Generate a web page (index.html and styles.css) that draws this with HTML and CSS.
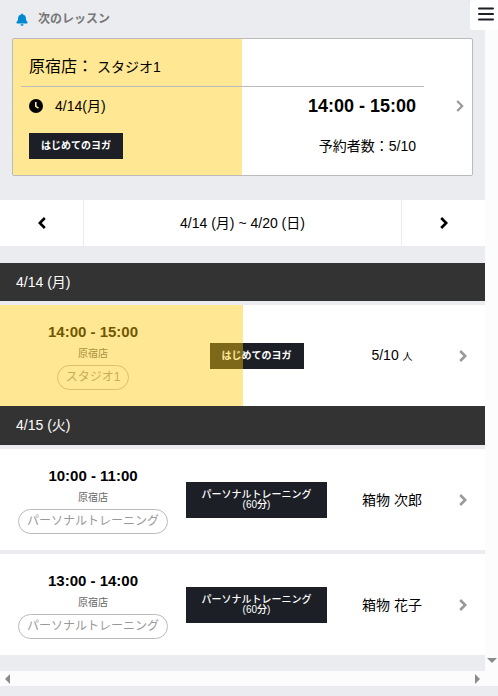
FILE: index.html
```html
<!DOCTYPE html>
<html lang="ja">
<head>
    <meta charset="UTF-8">
    <meta name="viewport" content="width=device-width, initial-scale=1.0">
    <title>レッスン</title>
    <link rel="stylesheet" href="styles.css">
</head>
<body>
    <button class="menu" type="button" aria-label="メニュー">
        <svg width="16" height="14" viewBox="0 0 16 14"><path d="M1 1.500h14M1 7h14M1 12.500h14" fill="none" stroke="#1c1f26" stroke-width="2" stroke-linecap="round"/></svg>
    </button>
    <div class="frame">
        <main class="content">
            <h1 class="next-title">
                <svg width="12" height="13" viewBox="0 0 12 13"><path d="M6 0.5c.6 0 .9.4.9.9C8.900 1.900 9.900 3.300 9.900 5c0 2.300.7 3.200 1.500 4 .5.600.2 1.500-.6 1.500H1.200C.4 10.500.1 9.600.6 9 1.400 8.200 2.100 7.300 2.100 5c0-1.700 1-3.100 3-3.600 0-.5.3-.9.9-.9zM4.500 11.200h3c0 1-.6 1.500-1.500 1.500s-1.500-.5-1.500-1.500z" fill="#0288d1"/></svg>
                次のレッスン
            </h1>
            <a class="card" href="#">
                <div class="card-body">
                    <div class="place"><span class="shop-name">原宿店：</span> スタジオ1</div>
                    <div class="line">
                        <span class="date">
                            <svg width="14" height="14" viewBox="0 0 14 14"><circle cx="7" cy="7" r="7" fill="#000"/><path d="M6.800 3v4.400l2.700 1.700" fill="none" stroke="#ffe794" stroke-width="1.600"/></svg>
                            4/14(月)
                        </span>
                        <strong class="card-time">14:00 - 15:00</strong>
                    </div>
                    <div class="line">
                        <span class="badge">はじめてのヨガ</span>
                        <span>予約者数：5/10</span>
                    </div>
                </div>
                <svg class="arrow" width="8" height="12" viewBox="0 0 8 12"><path d="M1.200 1l5 5-5 5" fill="none" stroke="#999" stroke-width="2.200"/></svg>
            </a>

            <nav class="week">
                <button type="button" aria-label="前の週">
                    <svg width="8" height="12" viewBox="0 0 8 12"><path d="M6.800 1l-5 5 5 5" fill="none" stroke="#000" stroke-width="2.600"/></svg>
                </button>
                <span class="range">4/14 (月) ~ 4/20 (日)</span>
                <button type="button" aria-label="次の週">
                    <svg width="8" height="12" viewBox="0 0 8 12"><path d="M1.200 1l5 5-5 5" fill="none" stroke="#000" stroke-width="2.600"/></svg>
                </button>
            </nav>

            <section class="day">
                <h2 class="day-title">4/14 (月)</h2>
                <a class="lesson reserved" href="#">
                    <div class="when">
                        <strong class="time">14:00 - 15:00</strong>
                        <span class="shop">原宿店</span>
                        <span class="room">スタジオ1</span>
                    </div>
                    <span class="badge">はじめてのヨガ</span>
                    <span class="who">5/10 <small>人</small></span>
                    <svg class="arrow" width="8" height="12" viewBox="0 0 8 12"><path d="M1.200 1l5 5-5 5" fill="none" stroke="#999" stroke-width="2.600"/></svg>
                </a>
            </section>

            <section class="day">
                <h2 class="day-title">4/15 (火)</h2>
                <a class="lesson" href="#">
                    <div class="when">
                        <strong class="time">10:00 - 11:00</strong>
                        <span class="shop">原宿店</span>
                        <span class="room">パーソナルトレーニング</span>
                    </div>
                    <span class="badge wide">パーソナルトレーニング<br>(60分)</span>
                    <span class="who">箱物 次郎</span>
                    <svg class="arrow" width="8" height="12" viewBox="0 0 8 12"><path d="M1.200 1l5 5-5 5" fill="none" stroke="#999" stroke-width="2.600"/></svg>
                </a>
                <a class="lesson" href="#">
                    <div class="when">
                        <strong class="time">13:00 - 14:00</strong>
                        <span class="shop">原宿店</span>
                        <span class="room">パーソナルトレーニング</span>
                    </div>
                    <span class="badge wide">パーソナルトレーニング<br>(60分)</span>
                    <span class="who">箱物 花子</span>
                    <svg class="arrow" width="8" height="12" viewBox="0 0 8 12"><path d="M1.200 1l5 5-5 5" fill="none" stroke="#999" stroke-width="2.600"/></svg>
                </a>
            </section>
        </main>
        <div class="bar-v">
            <svg width="10" height="5" viewBox="0 0 10 5"><path d="M0 0h10L5 5z" fill="#8b8b8b"/></svg>
        </div>
        <div class="bar-h">
            <svg width="5" height="10" viewBox="0 0 5 10"><path d="M5 0v10L0 5z" fill="#8b8b8b"/></svg>
            <svg width="5" height="10" viewBox="0 0 5 10"><path d="M0 0v10l5-5z" fill="#8b8b8b"/></svg>
        </div>
    </div>
</body>
</html>
```

FILE: styles.css
```css
* {
    box-sizing: border-box;
}
body {
    margin: 0;
    background: #ebecf0;
    color: #000;
    font-family: "Liberation Sans", "Noto Sans CJK JP", sans-serif;
    font-size: 14px;
    line-height: 20px;
}
a {
    color: inherit;
    text-decoration: none;
}
button {
    padding: 0;
    border: 0;
    background: #fff;
    cursor: pointer;
}
svg {
    display: block;
    flex-shrink: 0;
}
.menu {
    position: absolute;
    top: 0;
    right: 0;
    width: 28px;
    height: 30px;
    padding: 0 0 2px 8px;
    border-radius: 2px;
}
.frame {
    display: grid;
    grid-template-columns: 1fr 13px;
}
.content {
    padding-bottom: 16px;
}
.next-title {
    display: flex;
    align-items: center;
    gap: 10px;
    height: 38px;
    margin: 0;
    padding: 0 16px;
    color: #777;
    font-size: 12px;
    font-weight: bold;
}

/* 次のレッスン */
.card {
    display: flex;
    align-items: center;
    justify-content: space-between;
    height: 138px;
    margin: 0 12px;
    padding: 0 8px 2px;
    border: 1px solid #bbb;
    border-radius: 2px;
    background: linear-gradient(to right, #ffe794 50%, #fff 50%);
}
.card-body {
    width: 403px;
    max-width: 92%;
}
.place {
    height: 40px;
    padding: 0 8px;
    border-bottom: 1px solid #bbb;
    line-height: 40px;
    margin-bottom: -1px;
}
.shop-name {
    font-size: 16px;
}
.line {
    display: flex;
    align-items: center;
    justify-content: space-between;
    height: 40px;
    padding: 0 8px;
}
.date {
    display: flex;
    align-items: center;
    gap: 12px;
}
.card-time {
    font-size: 18px;
}
.badge {
    padding: 8px 12px;
    background: #1c1f26;
    color: #fff;
    font-size: 10px;
    font-weight: bold;
    line-height: 10px;
    text-align: center;
}

/* 週の切り替え */
.week {
    display: flex;
    height: 46px;
    margin: 24px 0 17px;
    background: #fff;
}
.week button {
    display: flex;
    align-items: center;
    justify-content: center;
    width: 83px;
}
.range {
    flex: 1;
    border: solid #ebecf0;
    border-width: 0 1px;
    line-height: 46px;
    text-align: center;
}

/* 日ごとの一覧 */
.day-title {
    margin: 0;
    padding: 0 16px;
    background: #333;
    color: #fff;
    font-size: 14px;
    font-weight: normal;
    line-height: 38px;
}
.day + .day .day-title {
    border-bottom: 1px solid #333;
}
.lesson {
    position: relative;
    display: grid;
    grid-template-columns: 186fr 141fr 130fr 28fr;
    align-items: center;
    justify-items: center;
    margin-top: 4px;
    padding: 16px 0;
    background: #fff;
}
.reserved::after {
    content: "";
    position: absolute;
    top: 0;
    left: 0;
    width: 50%;
    height: 100%;
    background: rgba(255, 199, 6, 0.43);
}
.when {
    display: flex;
    flex-direction: column;
    align-items: center;
}
.time {
    font-size: 15px;
    line-height: 22px;
}
.shop {
    color: #666;
    font-size: 10px;
    line-height: 22px;
}
.room {
    padding: 0 8px;
    border: 1px solid #bbb;
    border-radius: 13px;
    color: #999;
    font-size: 12px;
    line-height: 23px;
}
.badge.wide {
    width: 100%;
    padding: 8px 4px;
    font-weight: 500;
}
.who small {
    font-size: 10px;
}
.lesson .arrow {
    margin-right: 16px;
}

/* スクロールバー */
.bar-v,
.bar-h {
    display: flex;
    background: #fcfcfc;
}
.bar-v {
    align-items: flex-end;
    justify-content: center;
    padding-bottom: 8px;
}
.bar-h {
    grid-column: 1 / -1;
    align-items: center;
    justify-content: space-between;
    height: 15px;
    padding: 0 18px 0 5px;
}
```
